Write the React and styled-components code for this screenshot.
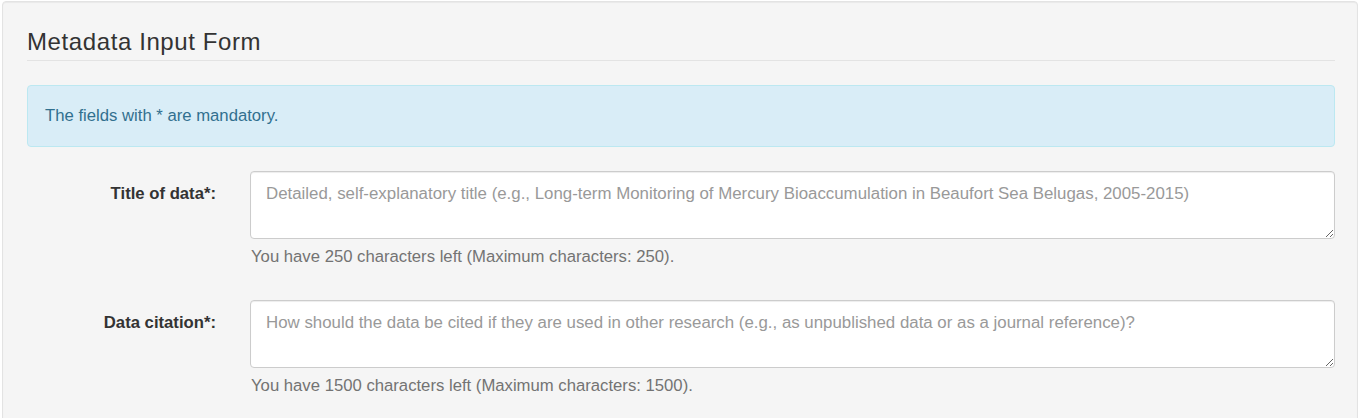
import React from 'react';
import styled, { createGlobalStyle } from 'styled-components';

const GlobalStyle = createGlobalStyle`
  body {
    margin: 0;
    background: #fff;
    font-family: "Liberation Sans", Arial, sans-serif;
    font-size: 16.7px;
    line-height: 24px;
    color: #333;
  }
`;

const Well = styled.div`
  margin: 1px 3px 0 2px;
  padding: 27px 22px 30px 24px;
  background: #f5f5f5;
  border: 1px solid #e3e3e3;
  border-radius: 4px;
  box-shadow: inset 0 1px 1px rgba(0, 0, 0, 0.05);
  min-height: 420px;
  box-sizing: border-box;
`;

const Heading = styled.h3`
  margin: 0;
  padding-bottom: 5px;
  font-size: 24px;
  letter-spacing: 0.6px;
  font-weight: 400;
  line-height: 26px;
  color: #333;
  border-bottom: 1px solid #e3e3e3;
`;

const Alert = styled.div`
  margin-top: 24px;
  padding: 18px 17px;
  background: #d9edf7;
  border: 1px solid #bce8f1;
  border-radius: 4px;
  color: #31708f;
`;

const Form = styled.form`
  display: flex;
  flex-direction: column;
  gap: 31px;
  margin-top: 24px;
`;

const FormGroup = styled.div`
  display: grid;
  grid-template-columns: 193px 1fr;
  column-gap: 30px;
`;

const Label = styled.label`
  padding-top: 11px;
  padding-right: 4px;
  text-align: right;
  font-weight: 700;
  color: #333;
`;

const Field = styled.div`
  display: flex;
  flex-direction: column;
`;

const TextArea = styled.textarea`
  display: block;
  box-sizing: border-box;
  width: 100%;
  height: 68px;
  padding: 10px 15px;
  font-family: inherit;
  font-size: 16.85px;
  line-height: 24px;
  color: #555;
  background: #fff;
  border: 1px solid #ccc;
  border-radius: 4px;
  box-shadow: inset 0 1px 1px rgba(0, 0, 0, 0.075);
  resize: vertical;
  outline: none;
  &::placeholder {
    color: #999;
  }
`;

const Help = styled.span`
  margin-top: 6px;
  padding-left: 1px;
  color: #737373;
`;

const fields = [
  {
    id: 'title',
    label: 'Title of data*:',
    placeholder:
      'Detailed, self-explanatory title (e.g., Long-term Monitoring of Mercury Bioaccumulation in Beaufort Sea Belugas, 2005-2015)',
    max: 250,
  },
  {
    id: 'citation',
    label: 'Data citation*:',
    placeholder:
      'How should the data be cited if they are used in other research (e.g., as unpublished data or as a journal reference)?',
    max: 1500,
  },
];

const App = () => (
  <>
    <GlobalStyle />
    <Well>
      <Heading>Metadata Input Form</Heading>
      <Alert>The fields with * are mandatory.</Alert>
      <Form>
        {fields.map((f) => (
          <FormGroup key={f.id}>
            <Label htmlFor={f.id}>{f.label}</Label>
            <Field>
              <TextArea id={f.id} placeholder={f.placeholder} maxLength={f.max} />
              <Help>
                You have {f.max} characters left (Maximum characters: {f.max}).
              </Help>
            </Field>
          </FormGroup>
        ))}
      </Form>
    </Well>
  </>
);

export default App;
